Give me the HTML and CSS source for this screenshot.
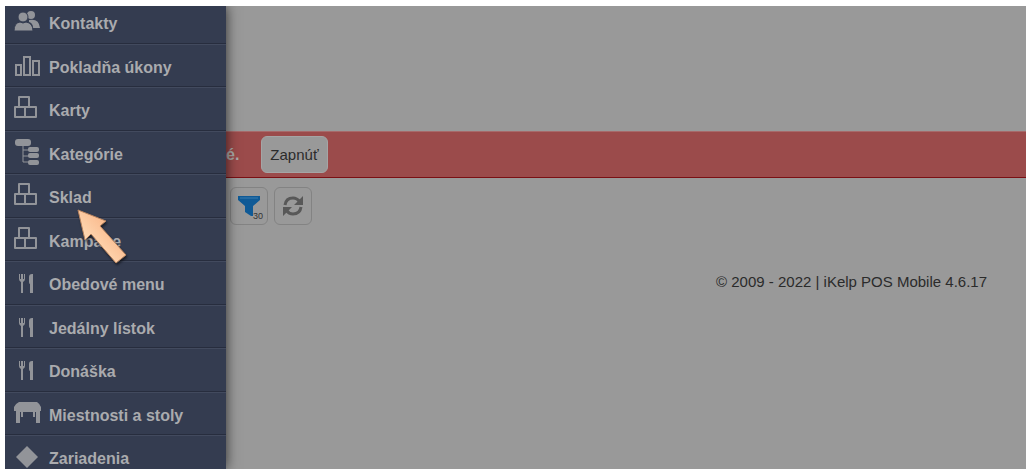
FILE: index.html
```html
<!doctype html>
<html lang="sk">
<head>
    <meta charset="UTF-8">
    <meta name="viewport" content="width=device-width, initial-scale=1.0">
    <title>iKelp POS Mobile</title>
    <link rel="stylesheet" href="styles.css">
</head>
<body>
<!-- Shared icons -->
<svg class="sprite" aria-hidden="true">
    <symbol id="cubes" viewBox="0 0 28 28">
        <g fill="none" stroke="currentColor" stroke-width="2" stroke-linejoin="round">
            <rect x="5" y="2" width="10" height="10"/>
            <rect x="1" y="12" width="10" height="10"/>
            <rect x="11" y="12" width="11" height="10"/>
        </g>
    </symbol>
    <symbol id="cutlery" viewBox="0 0 28 28">
        <path d="M5 5h1v5h1V5h2v5h1V5h1v5q0 2-2 3v11H7V13q-2-1-2-3z"/>
        <path d="M15 8q0-3 3-3h1v19h-3v-9q-1 0-1-2z"/>
    </symbol>
</svg>

<div class="app">
    <nav class="menu">
        <ul>
            <li><a href="#">
                <svg class="icon" viewBox="0 0 28 28">
                    <circle cx="17" cy="7" r="4"/>
                    <path d="M15 12q10-2 11 8h-7q0-5-4-6z"/>
                    <circle cx="9" cy="9" r="5" stroke="#343c50"/>
                    <path d="M0 23q0-8 6-9q3 2 6 0q7 1 7 9z" stroke="#343c50"/>
                </svg>
                Kontakty</a></li>
            <li><a href="#">
                <svg class="icon" viewBox="0 0 28 28">
                    <g fill="none" stroke="currentColor" stroke-width="2">
                        <rect x="2" y="13" width="5" height="10"/>
                        <rect x="10" y="5" width="6" height="18"/>
                        <rect x="19" y="9" width="6" height="14"/>
                    </g>
                </svg>
                Pokladňa úkony</a></li>
            <li><a href="#"><svg class="icon"><use href="#cubes"/></svg>Karty</a></li>
            <li><a href="#">
                <svg class="icon" viewBox="0 0 28 28">
                    <rect x="1" y="0" width="16" height="7" rx="3"/>
                    <rect x="14" y="8" width="11" height="5" rx="2"/>
                    <rect x="14" y="14" width="11" height="5" rx="2"/>
                    <rect x="14" y="21" width="11" height="5" rx="2"/>
                    <path d="M9 6v17H15M9 11H15M9 17H15" fill="none" stroke="currentColor"/>
                </svg>
                Kategórie</a></li>
            <li><a href="#"><svg class="icon"><use href="#cubes"/></svg>Sklad</a>
                <svg class="pointer" viewBox="0 0 52 58">
                    <defs>
                        <linearGradient id="peach" x1="0" y1="1" x2="1" y2="0">
                            <stop offset="0.300" stop-color="#ffd9b4"/>
                            <stop offset="0.700" stop-color="#fab98c"/>
                        </linearGradient>
                    </defs>
                    <path d="M2 2L30 13L24 18L50 47L40 55L15 26L9 32Z" fill="url(#peach)" stroke="#b98560"/>
                </svg>
            </li>
            <li><a href="#"><svg class="icon"><use href="#cubes"/></svg>Kampane</a></li>
            <li><a href="#"><svg class="icon"><use href="#cutlery"/></svg>Obedové menu</a></li>
            <li><a href="#"><svg class="icon"><use href="#cutlery"/></svg>Jedálny lístok</a></li>
            <li><a href="#"><svg class="icon"><use href="#cutlery"/></svg>Donáška</a></li>
            <li><a href="#">
                <svg class="icon" viewBox="0 0 28 28">
                    <path d="M5 2h18q3 2 4 5v4h-1v12h-4V12h-1v5h-2v-5H9v5H7v-5H6v11H2V11H0V7q1-3 5-5z"/>
                </svg>
                Miestnosti a stoly</a></li>
            <li><a href="#">
                <svg class="icon" viewBox="0 0 28 28"><path d="M13 3l11 11l-11 11L2 14z"/></svg>
                Zariadenia</a></li>
        </ul>
    </nav>

    <main class="content">
        <div class="alert">
            <span>é.</span>
            <button class="btn">Zapnúť</button>
        </div>
        <div class="toolbar">
            <button class="tool" aria-label="Filter">
                <svg viewBox="0 0 28 28">
                    <path d="M3 4h22v4l-7 6v10h-2l-6-4v-6L3 8z" fill="#0f5a96"/>
                    <path d="M5 6h18" stroke="#3a7db0"/>
                </svg>
                <span class="count">30</span>
            </button>
            <button class="tool" aria-label="Obnoviť">
                <svg viewBox="0 0 28 28">
                    <g fill="none" stroke="#585858" stroke-width="3">
                        <path d="M6 13q1-7 8-7q4 0 7 4"/>
                        <path d="M22 15q-1 7-8 7q-4 0-7-4"/>
                    </g>
                    <path d="M24 4v9h-9zM4 24v-9h9z" fill="#585858"/>
                </svg>
            </button>
        </div>
        <footer>© 2009 - 2022 | iKelp POS Mobile 4.6.17</footer>
    </main>
</div>
</body>
</html>
```
FILE: styles.css
```css
* {
    box-sizing: border-box;
}

body {
    margin: 0;
    padding: 6px 5px 4px;
    height: 100vh;
    background: #fff;
    font-family: "Liberation Sans", Arial, sans-serif;
}

.sprite {
    position: absolute;
    width: 0;
    height: 0;
}

.app {
    display: flex;
    height: 100%;
    overflow: hidden;
    background: #999;
}

/* Side menu */
.menu {
    flex: 0 0 221px;
    z-index: 1;
    background: #343c50;
    box-shadow: 0 0 12px rgba(0, 0, 0, 0.7);
}

.menu ul {
    margin: -6px 0 0; /* scrolled a little */
    padding: 0;
    list-style: none;
}

.menu li {
    position: relative;
    height: 44px;
    border-top: 1px solid #424a5e;
    border-bottom: 1px solid #272d3e;
}

.menu li:nth-child(even) {
    height: 43px;
}

.menu a {
    display: flex;
    align-items: center;
    gap: 7px;
    height: 100%;
    padding-left: 9px;
    padding-top: 4px;
    color: #aaabae;
    font-size: 16px;
    font-weight: bold;
    text-decoration: none;
}

.icon {
    width: 28px;
    height: 28px;
    margin-bottom: 4px;
    color: #929499;
    fill: currentColor;
}

.pointer {
    position: absolute;
    z-index: 2;
    left: 71px;
    top: 33px;
    width: 52px;
    height: 58px;
    filter: drop-shadow(1px 2px 1px rgba(0, 0, 0, 0.5));
}

/* Page */
.content {
    flex: 1;
    padding-top: 125px;
}

.alert {
    display: flex;
    align-items: center;
    gap: 22px;
    height: 47px;
    border-top: 1px solid #a76a6a;
    border-bottom: 1px solid #7a1014;
    background: #9b4b4b;
    color: #aaa;
    font-weight: bold;
}

.btn {
    height: 37px;
    padding: 0 8px;
    border: 1px solid #a5a5a5;
    border-radius: 6px;
    background: #999;
    color: #2b2b2b;
    font-family: inherit;
    font-size: 15px;
}

.toolbar {
    display: flex;
    gap: 6px;
    padding: 9px 4px;
}

.tool {
    position: relative;
    width: 38px;
    height: 38px;
    padding: 4px;
    border: 1px solid #838383;
    border-radius: 6px;
    background: #999;
}

.tool svg {
    display: block;
    width: 28px;
    height: 28px;
}

.count {
    position: absolute;
    right: 4px;
    bottom: 3px;
    color: #333;
    font-size: 9px;
}

footer {
    padding: 39px 39px 0 0;
    color: #2b2b2b;
    font-size: 15px;
    text-align: right;
}
```
